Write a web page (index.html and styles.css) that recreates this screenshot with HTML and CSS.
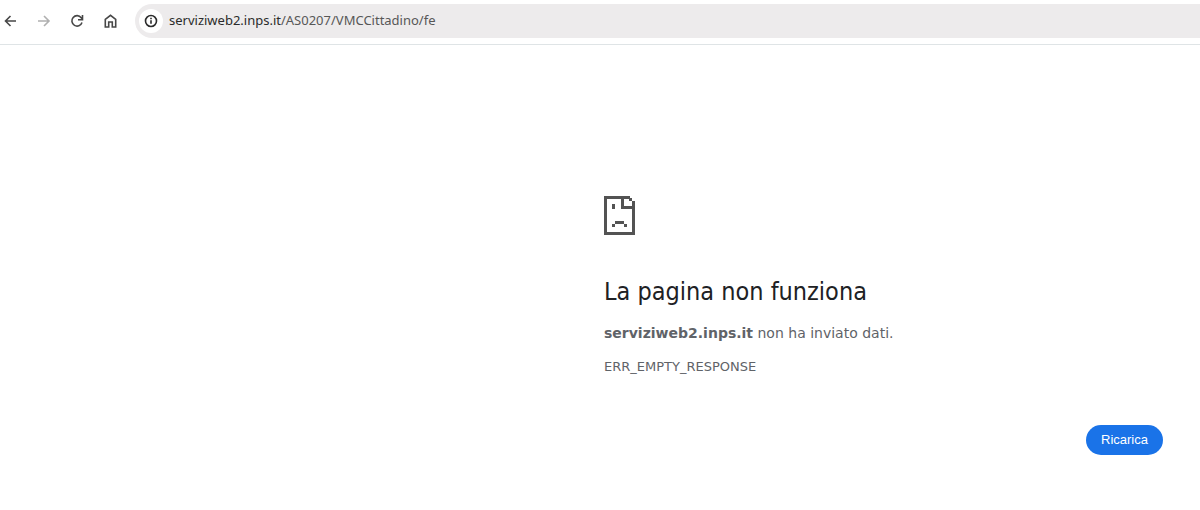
FILE: index.html
```
<!DOCTYPE html>
<html lang="it">
<head>
  <meta charset="UTF-8">
  <meta name="viewport" content="width=device-width, initial-scale=1.0">
  <title>serviziweb2.inps.it</title>
  <link rel="stylesheet" href="styles.css">
</head>
<body>
  <!-- Toolbar -->
  <header class="toolbar">
    <nav class="nav-buttons">
      <button class="icon-button" type="button" aria-label="Indietro">
        <svg viewBox="0 0 16 16"><path d="M13 8H3M7.500 3L2.500 8l5 5"/></svg>
      </button>
      <button class="icon-button" type="button" aria-label="Avanti" disabled>
        <svg viewBox="0 0 16 16"><path d="M2 8h10.500M8 3l5 5-5 5"/></svg>
      </button>
      <button class="icon-button" type="button" aria-label="Ricarica la pagina">
        <svg viewBox="0 0 16 16"><path d="M13 9.500A5.200 5.200 0 1 1 12.200 4.700L13.300 6M13.500 2v4.700H9"/></svg>
      </button>
      <button class="icon-button" type="button" aria-label="Pagina iniziale">
        <svg viewBox="0 0 16 16"><path d="M3.300 6.300L8.500 2.300l5.200 4v7.700h-3.400V9H6.700v5H3.300z"/></svg>
      </button>
    </nav>
    <div class="address-bar">
      <button class="site-info" type="button" aria-label="Informazioni sul sito">
        <svg viewBox="0 0 16 16"><circle cx="8" cy="8" r="5.500"/><path d="M8 7.300v3.500M8 4.800v1.500"/></svg>
      </button>
      <a class="url" href="#">serviziweb2.inps.it<span class="path">/AS0207/VMCCittadino/fe</span></a>
    </div>
  </header>

  <!-- Error page -->
  <main class="error">
    <svg class="error-icon" viewBox="0 0 31 39" aria-hidden="true">
      <path d="M0 0h26v3h-6v7h8v-2h3v31H0zM3 3v33h25V13H17V3z" fill-rule="evenodd"/>
      <path d="M25 2h3v3h-3zM28 5h3v4h-3z"/>
      <path d="M8 8h3v5H8zM11 25h9v3h-9zM8 28h3v3H8zM20 28h3v3h-3z"/>
    </svg>
    <h1>La pagina non funziona</h1>
    <p class="summary"><strong>serviziweb2.inps.it</strong> non ha inviato dati.</p>
    <p class="error-code">ERR_EMPTY_RESPONSE</p>
    <div class="actions">
      <button class="reload" type="button">Ricarica</button>
    </div>
  </main>
</body>
</html>
```
FILE: styles.css
```
body {
  margin: 0;
  background-color: #fff;
  color: #5f6368;
  font-family: "DejaVu Sans", sans-serif;
}

button {
  border: none;
  padding: 0;
  cursor: pointer;
}

/* toolbar */
.toolbar {
  display: flex;
  align-items: center;
  gap: 17px;
  padding: 4px 0 6px 3px;
  border-bottom: 1px solid #dfe4e6;
}

.nav-buttons {
  display: flex;
  gap: 17px;
}

.icon-button {
  display: flex;
  background: none;
  color: #474747;
}

.icon-button:disabled {
  color: #b0b0b0;
}

.icon-button svg,
.site-info svg {
  width: 16px;
  height: 16px;
  fill: none;
  stroke: currentColor;
  stroke-width: 1.6;
}

.address-bar {
  flex: 1;
  display: flex;
  align-items: center;
  gap: 6px;
  height: 34px;
  padding-left: 4px;
  background-color: #edebec;
  border-radius: 17px 0 0 17px;
}

.site-info {
  display: flex;
  align-items: center;
  justify-content: center;
  width: 24px;
  height: 24px;
  border-radius: 50%;
  background-color: #fff;
  color: #2b2b2b;
}

.url {
  color: #2b2b2b;
  font-family: "Noto Sans", sans-serif;
  font-size: 13px;
  line-height: 18px;
  padding-bottom: 2px;
  text-decoration: none;
}

.url .path {
  color: #575757;
}

/* error page */
.error {
  margin: 151px 37px 0 auto;
  width: 559px;
  font-size: 14px;
}

.error-icon {
  display: block;
  width: 31px;
  height: 39px;
  fill: #535353;
}

.error h1 {
  margin: 43px 0 16px;
  color: #202124;
  font-family: "DejaVu Sans Condensed", "DejaVu Sans", sans-serif;
  font-size: 25px;
  font-weight: 500;
  line-height: 28px;
}

.error p {
  margin: 0;
}

.error .summary {
  margin-bottom: 13px;
  line-height: 22px;
}

.error .error-code {
  font-size: 13px;
  line-height: 20px;
}

.actions {
  display: flex;
  justify-content: flex-end;
  margin-top: 48px;
}

.reload {
  padding: 0 15px;
  border-radius: 15px;
  background-color: #1a73e8;
  color: #fff;
  font-family: "Liberation Sans", Arial, sans-serif;
  font-size: 13px;
  line-height: 30px;
}
```
